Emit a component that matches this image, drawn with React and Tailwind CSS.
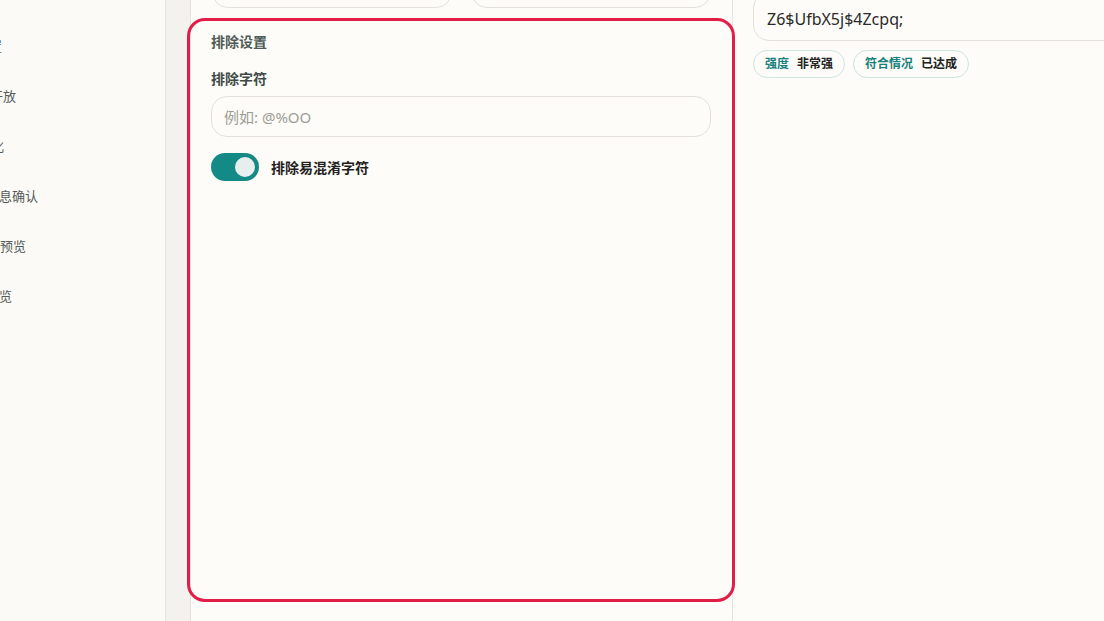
import { useState } from 'react';

const font = { fontFamily: '"Noto Sans", "Noto Sans CJK SC", sans-serif' };

const navItems = [
  { label: '设置', shift: '-ml-[24px]' },
  { label: '开放', shift: '-ml-[10px]' },
  { label: '优化', shift: '-ml-[22px]' },
  { label: '消息确认', shift: '-ml-[14px]' },
  { label: '实时预览', shift: '-ml-[26px]' },
  { label: '预览', shift: '-ml-[14px]' },
];

function Toggle({ on, onChange }) {
  return (
    <button
      type="button"
      onClick={() => onChange(!on)}
      className={`flex h-[28px] w-[48px] shrink-0 items-center rounded-full px-[4px] transition-colors ${
        on ? 'justify-end bg-[#138a86]' : 'justify-start bg-[#d9d7cf]'
      }`}
    >
      <span className="block h-[20px] w-[20px] rounded-full bg-[#e6efed]" />
    </button>
  );
}

export default function App() {
  const [exclude, setExclude] = useState('');
  const [noConfusing, setNoConfusing] = useState(true);

  return (
    <div style={font} className="flex h-[621px] w-[1104px] overflow-hidden bg-[#fdfcf8] text-[#222]">
      {/* Sidebar (scrolled off to the left) */}
      <aside className="flex w-[166px] shrink-0 flex-col overflow-hidden border-r border-[#e5e3dc] bg-[#fbfaf6] pt-[22px]">
        {navItems.map((item) => (
          <div key={item.label} className="flex h-[50px] items-center">
            <span className={`whitespace-nowrap text-[13px] text-[#555b58] ${item.shift}`}>{item.label}</span>
          </div>
        ))}
      </aside>

      <div className="w-[24px] shrink-0 bg-[#f3f2ee]" />

      {/* Middle column */}
      <main className="flex w-[543px] shrink-0 flex-col border-x border-[#e5e3dc] bg-[#fdfcf8] px-[21px]">
        <div className="-mt-[32px] grid grid-cols-2 gap-[19px]">
          <div className="h-[40px] rounded-2xl border border-[#e3e1d9] bg-[#fdfcf8]" />
          <div className="h-[40px] rounded-2xl border border-[#e3e1d9] bg-[#fdfcf8]" />
        </div>

        <section className="relative z-10 -ml-[25px] -mr-[24px] mt-[10px] h-[584px] rounded-[18px] border-[3px] border-[#e11d48] px-[21px] pt-[11px]">
          <h3 className="text-[14px] font-bold leading-[20px] text-[#4f5b57]">排除设置</h3>

          <label className="mt-[17px] block text-[14px] font-bold leading-[20px] text-[#3f4a46]">排除字符</label>
          <input
            value={exclude}
            onChange={(e) => setExclude(e.target.value)}
            placeholder="例如: @%OO"
            className="mt-[7px] block h-[41px] w-full rounded-2xl border border-[#e3e1d9] bg-[#fdfcf8] px-[12px] text-[15px] text-[#222] placeholder-[#9c9c96] outline-none"
          />

          <div className="mt-[16px] flex items-center gap-[12px]">
            <Toggle on={noConfusing} onChange={setNoConfusing} />
            <span className="text-[14px] font-bold text-[#1f1f1f]">排除易混淆字符</span>
          </div>
        </section>
      </main>

      {/* Right column */}
      <section className="min-w-0 flex-1 pl-[20px]">
        <div className="-mt-[8px] flex h-[49px] w-[420px] items-center rounded-2xl border border-[#e3e1d9] px-[13px] pt-[5px]">
          <span className="text-[16px] text-[#2a2a2a]">Z6$UfbX5j$4Zcpq;</span>
        </div>
        <div className="mt-[9px] flex gap-[8px]">
          <span className="flex h-[28px] items-center gap-[8px] rounded-full border border-[#cfe4e1] px-[11px] text-[12px] font-bold">
            <span className="text-[#16807c]">强度</span>
            <span className="text-[#222]">非常强</span>
          </span>
          <span className="flex h-[28px] items-center gap-[8px] rounded-full border border-[#cfe4e1] px-[11px] text-[12px] font-bold">
            <span className="text-[#16807c]">符合情况</span>
            <span className="text-[#222]">已达成</span>
          </span>
        </div>
      </section>
    </div>
  );
}
